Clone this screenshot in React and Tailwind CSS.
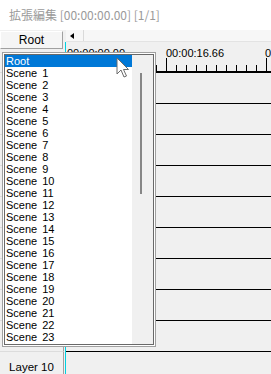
import React from 'react';

const scenes = ['Root', ...Array.from({ length: 23 }, (_, i) => `Scene ${i + 1}`)];
const layers = Array.from({ length: 10 }, (_, i) => `Layer ${i + 1}`);

function Cursor() {
  return (
    <svg className="absolute left-[116px] top-[57px]" width="14" height="22" viewBox="0 0 14 22">
      <path d="M1 1 L1 17 L5 13 L8 20 L10.5 19 L7.5 12.5 L12.5 12.5 Z" fill="#fff" stroke="#6b6b6b" strokeWidth="1" strokeLinejoin="miter" />
    </svg>
  );
}

function Ruler() {
  const ticks = Array.from({ length: 21 }, (_, i) => 0.5 + i * 10);
  return (
    <div className="relative h-[30px]">
      <svg className="absolute left-0 top-0" width="206" height="30">
        {ticks.map((x, i) => (
          <line key={i} x1={x} x2={x} y1={i % 10 === 0 ? 16 : 23} y2="30" stroke="#000" strokeWidth="1" />
        ))}
        <line x1="0" x2="206" y1="29.5" y2="29.5" stroke="#000" />
      </svg>
      <span className="absolute left-[1px] top-[5px] text-[11px] leading-[12px]">00:00:00.00</span>
      <span className="absolute left-[100px] top-[5px] text-[11px] leading-[12px]">00:00:16.66</span>
      <span className="absolute left-[199px] top-[5px] text-[11px] leading-[12px]">00:00:33.33</span>
    </div>
  );
}

export default function App() {
  return (
    <div className="relative w-[271px] h-[374px] overflow-hidden bg-[#f0f0f0] text-black" style={{ fontFamily: '"Liberation Sans", Arial, sans-serif' }}>
      {/* title bar */}
      <div className="h-[30px] bg-white flex items-center pl-[9px] text-[12px] text-[#9a9a9a]" style={{ fontFamily: '"Noto Sans CJK JP", "Noto Sans", sans-serif' }}>
        拡張編集 [00:00:00.00] [1/1]
      </div>

      <div className="flex">
        {/* layer headers */}
        <div className="w-[65px] shrink-0">
          <div className="h-[42px] pt-[1px]">
            <div className="w-[63px] h-[18px] flex items-center justify-center text-[12px] bg-[#f5f5f5] border border-t-white border-l-white border-r-[#a0a0a0] border-b-[#a0a0a0]">
              Root
            </div>
          </div>
          {layers.map((l) => (
            <div key={l} className="h-[31px] w-[64px] flex items-center justify-center pt-[2px] text-[11.5px] border-t border-t-[#dcdcdc] border-r border-r-[#a0a0a0]">
              {l}
            </div>
          ))}
        </div>

        {/* cursor line */}
        <div className="w-px bg-[#00d0e0] mt-[12px]" />

        {/* timeline */}
        <div className="flex-1">
          <div className="h-[12px] bg-[#f7f7f7] flex items-center border-b border-[#e3e3e3]">
            <span className="ml-[4px] w-0 h-0 border-y-[3px] border-y-transparent border-r-[4px] border-r-black" />
            <span className="ml-[9px] h-full border-l border-[#dadada]" />
          </div>
          <Ruler />
          {layers.map((l) => (
            <div key={l} className="h-[31px] border-t border-black" />
          ))}
        </div>
      </div>

      {/* scene dropdown */}
      <div className="absolute left-[2px] top-[52px] w-[154px] h-[295px] border border-[#a0a0a0] bg-white p-[1px]">
        <div className="h-full border border-[#696969] flex">
          <div className="w-[127px] text-[11px] leading-[12px]" style={{ wordSpacing: '2px' }}>
            {scenes.map((s, i) => (
              <div key={s} className={`h-[12px] pl-[1px] overflow-hidden ${i === 0 ? 'bg-[#0078d7] text-white' : ''}`}>{s}</div>
            ))}
          </div>
          <div className="relative flex-1 bg-[#f0f0f0]">
            <div className="absolute left-[8px] top-[18px] w-[2px] h-[121px] bg-[#868686]" />
          </div>
        </div>
      </div>

      <Cursor />
    </div>
  );
}
